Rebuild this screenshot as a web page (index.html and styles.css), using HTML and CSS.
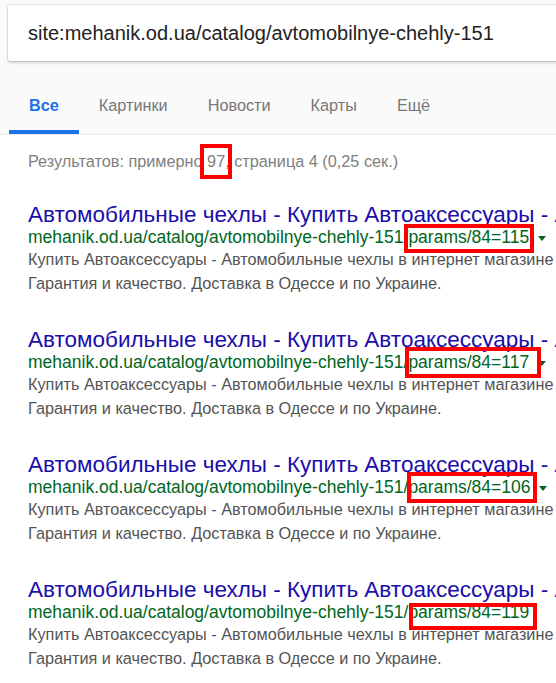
FILE: index.html
```html
<!DOCTYPE html>
<html lang="ru">
<head>
	<meta charset="UTF-8">
	<meta name=viewport content="width=device-width,initial-scale=1">
	<title>site:mehanik.od.ua/catalog/avtomobilnye-chehly-151</title>
	<link rel="stylesheet" href="styles.css">
</head>
<body>

	<div id="header">
		<div class="searchbox">site:mehanik.od.ua/catalog/avtomobilnye-chehly-151</div>

		<ul class="tabs">
			<li class="tab active">Все</li>
			<li class="tab">Картинки</li>
			<li class="tab">Новости</li>
			<li class="tab">Карты</li>
			<li class="tab">Ещё</li>
		</ul>
	</div>

	<div id="results">
		<p class="stats">Результатов: примерно <span class="mark mark-count">97,</span> страница 4 (0,25 сек.)</p>

		<div class="result">
			<h3 class="title">Автомобильные чехлы - Купить Автоаксессуары - Автомобильные</h3>
			<div class="url">mehanik.od.ua/catalog/avtomobilnye-chehly-151<span class="mark mark-1">/params/84=115</span><span class="arrow"></span></div>
			<p class="snippet">Купить Автоаксессуары - Автомобильные чехлы в интернет магазине Механик.<br>Гарантия и качество. Доставка в Одессе и по Украине.</p>
		</div>

		<div class="result">
			<h3 class="title">Автомобильные чехлы - Купить Автоаксессуары - Автомобильные</h3>
			<div class="url">mehanik.od.ua/catalog/avtomobilnye-chehly-151<span class="mark mark-2">/params/84=117</span><span class="arrow"></span></div>
			<p class="snippet">Купить Автоаксессуары - Автомобильные чехлы в интернет магазине Механик.<br>Гарантия и качество. Доставка в Одессе и по Украине.</p>
		</div>

		<div class="result">
			<h3 class="title">Автомобильные чехлы - Купить Автоаксессуары - Автомобильные</h3>
			<div class="url">mehanik.od.ua/catalog/avtomobilnye-chehly-151<span class="mark mark-3">/params/84=106</span><span class="arrow"></span></div>
			<p class="snippet">Купить Автоаксессуары - Автомобильные чехлы в интернет магазине Механик.<br>Гарантия и качество. Доставка в Одессе и по Украине.</p>
		</div>

		<div class="result">
			<h3 class="title">Автомобильные чехлы - Купить Автоаксессуары - Автомобильные</h3>
			<div class="url">mehanik.od.ua/catalog/avtomobilnye-chehly-151<span class="mark mark-4">/params/84=119</span></div>
			<p class="snippet">Купить Автоаксессуары - Автомобильные чехлы в интернет магазине Механик.<br>Гарантия и качество. Доставка в Одессе и по Украине.</p>
		</div>
	</div>

</body>
</html>
```

FILE: styles.css
```css
body {
	margin: 0;
	background: #ffffff;
	font-family: "Liberation Sans", Arial, sans-serif;
	overflow: hidden;
}

#header {
	background: #fafafa;
	border-bottom: 1px solid #ebebeb;
	padding-top: 5px;
}

.searchbox {
	margin: 0 -40px 0 8px;
	height: 56px;
	line-height: 56px;
	padding-left: 20px;
	background: #ffffff;
	border-radius: 2px;
	box-shadow: 0 2px 3px rgba(0, 0, 0, .16), 0 0 0 1px rgba(0, 0, 0, .07);
	font-size: 20px;
	color: #222222;
	white-space: nowrap;
}

.tabs {
	display: flex;
	list-style: none;
	margin: 34px 0 0 9px;
	padding: 0;
}

.tab {
	font-size: 16.25px;
	line-height: 20px;
	color: #777777;
	padding: 0 0 15px;
	border-bottom: 4px solid transparent;
	margin-right: 40px;
}

.tab.active {
	color: #1a73e8;
	font-weight: bold;
	padding: 0 20px 15px;
	border-bottom-color: #1a73e8;
	margin-right: 20px;
}

#results {
	padding-left: 28px;
	white-space: nowrap;
}

.stats {
	margin: 16px 0 31px;
	font-size: 16.25px;
	line-height: 20px;
	color: #808080;
}

.result {
	margin-bottom: 32px;
}

.title {
	margin: 0;
	font-weight: normal;
	font-size: 22.5px;
	line-height: 26px;
	color: #1a0dab;
}

.url {
	font-size: 17.5px;
	line-height: 19px;
	color: #006621;
}

.arrow {
	display: inline-block;
	margin-left: 9px;
	vertical-align: middle;
	border-top: 5px solid #006621;
	border-left: 4px solid transparent;
	border-right: 4px solid transparent;
}

.snippet {
	margin: 0;
	font-size: 16.25px;
	line-height: 24px;
	color: #545454;
}

/* red annotation frames drawn over the text */
.mark {
	position: relative;
}

.mark::after {
	content: "";
	position: absolute;
	border: 4px solid #ff0000;
	pointer-events: none;
}

.mark-count::after {
	top: -8px;
	bottom: -9px;
	left: -7px;
	right: -2px;
}

.mark-1::after {
	top: -3px;
	bottom: -6px;
	left: 0;
	right: -5px;
}

.mark-2::after {
	top: -5px;
	bottom: -6px;
	left: 1px;
	right: -12px;
}

.mark-3::after {
	top: -5px;
	bottom: -6px;
	left: 3px;
	right: -7px;
}

.mark-4::after {
	top: 1px;
	bottom: -8px;
	left: 5px;
	right: -8px;
}
```
